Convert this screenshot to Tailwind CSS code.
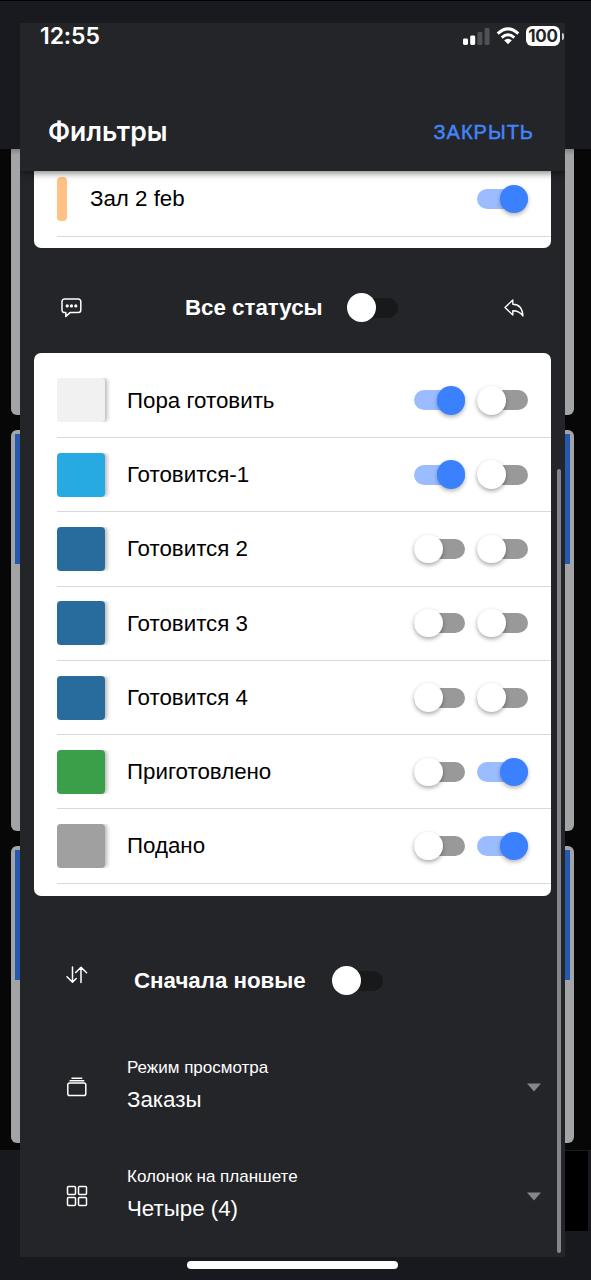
<!DOCTYPE html>
<html lang="ru">
<head>
<meta charset="utf-8">
<title>Фильтры</title>
<script src="https://cdn.jsdelivr.net/npm/@tailwindcss/browser@4"></script>
</head>
<body class="bg-[#050505] font-['Liberation_Sans',Arial,sans-serif]">
<div class="relative w-[591px] h-[1280px] overflow-hidden">

  <!-- Page behind the dialog -->
  <div class="flex flex-col h-full bg-[#070707]">
    <div class="h-[149px] shrink-0 bg-[#191a1f] border-t border-black"></div>
    <div class="h-[1001px] shrink-0 pl-[11px] pr-[17px] flex flex-col">
      <div class="h-[266px] rounded-b-md bg-linear-to-b from-[#838485] to-[#a3a4a6] to-[6px]"></div>
      <div class="mt-[15px] h-[401px] rounded-md bg-[#a3a4a6] px-1 pt-[4px]"><div class="h-[130px] bg-[#2459b0]"></div></div>
      <div class="mt-[15px] h-[297px] rounded-md bg-[#a3a4a6] px-1 pt-[4px]"><div class="h-[130px] bg-[#2459b0]"></div></div>
    </div>
    <div class="grow bg-[#18191e] border-t border-[#1c1d20] pr-[3px] flex justify-end"><div class="w-[60px] h-[80px] bg-black"></div></div>
  </div>

  <!-- Dialog -->
  <div class="absolute left-[20px] top-[23px] w-[545px] h-[1234px] bg-[#242529] flex flex-col text-white">
    <header class="relative z-10 h-[148px] shrink-0 bg-[#242529] shadow-[0_2px_7px_rgba(0,0,0,0.5)] [clip-path:inset(0_0_-14px_0)] flex flex-col">
      <div class="h-[26px] pl-[20px] pr-px flex items-center justify-between font-['Inter',sans-serif]">
        <span id="time" class="text-[23px] leading-[26px] font-semibold tracking-[-0.1px]">12:55</span>
        <div class="flex items-center">
          <svg class="w-[27px] h-[17px]" viewBox="0 0 27 17"><g fill="#fff"><rect y="10.5" width="5" height="6.5" rx="1.4"/><rect x="7.2" y="7.5" width="5" height="9.500" rx="1.400"/></g><g fill="#505155"><rect x="14.400" y="4" width="5" height="13" rx="1.400"/><rect x="21.600" y="0" width="5" height="17" rx="1.400"/></g></svg>
          <svg class="w-[24px] h-[18px] ml-[6.500px]" viewBox="0 0 24 18" fill="none" stroke="#fff" stroke-width="3"><path d="M1.700 6.600Q12-2.900 22.300 6.600"/><path d="M5.700 10.600Q12 5 18.300 10.600"/><path d="M8.100 13.200Q12 10.200 15.900 13.200L12 17.300Z" fill="#fff" stroke="none"/></svg>
          <div class="ml-[6px] w-[34px] h-[20px] rounded-[6px] bg-white text-[#242529] text-[17px] leading-[20px] font-bold text-center tracking-[-0.200px]">100</div>
          <div class="ml-[1.500px] w-[2.500px] h-[7px] rounded-r-full bg-[#c9c9cb]"></div>
        </div>
      </div>
      <div class="mt-[60px] h-[46px] pl-[28px] pr-[31px] flex items-center justify-between">
        <h1 class="font-['Inter',sans-serif] text-[26.500px] font-semibold">Фильтры</h1>
        <button class="text-[#4384f7] text-[20px] tracking-[1px] [-webkit-text-stroke:0.500px_#4384f7] leading-none">ЗАКРЫТЬ</button>
      </div>
    </header>

    <main class="flex flex-col px-[14px] text-[22.300px]">
      <section class="h-[77px] bg-white rounded-b-[7px] pl-[23px] text-black">
        <div class="h-[66px] border-b border-[#d9d9d9] flex items-center pr-[23px] pb-[9px]">
          <div class="w-[10px] h-[44px] rounded-[4px] bg-[#ffc184]"></div>
          <span class="ml-[23px] grow">Зал 2 feb</span>
          <div class="on w-[51px] h-[20px] rounded-full bg-[#9bbdff] flex items-center justify-end"><i class="size-[28.500px] shrink-0 rounded-full bg-[#3a80ff] shadow-[0_2px_4px_rgba(0,0,0,0.3)]"></i></div>
        </div>
      </section>

      <div class="h-[105px] flex items-center pl-[27px] pr-[27px] pt-[14px]">
        <svg class="w-[21px] h-[20px]" viewBox="0 0 21 20" fill="none" stroke="#fff" stroke-width="1.500" stroke-linejoin="round"><path d="M3.500 1h13.800a2.500 2.500 0 0 1 2.500 2.500v8.600a2.500 2.500 0 0 1-2.500 2.500H9L4.800 18.400v-3.800H3.500A2.500 2.500 0 0 1 1 12.100V3.500A2.500 2.500 0 0 1 3.500 1Z"/><g fill="#fff" stroke="none"><circle cx="6.200" cy="7.900" r="1.600"/><circle cx="10.500" cy="7.900" r="1.600"/><circle cx="14.800" cy="7.900" r="1.600"/></g></svg>
        <b class="ml-[103px] whitespace-nowrap w-[162px]">Все статусы</b>
        <div class="w-[51px] h-[20px] rounded-full bg-[#18191a] flex items-center shrink-0"><i class="size-[29px] shrink-0 rounded-full bg-white"></i></div>
        <svg class="ml-auto w-[20px] h-[18px] mt-px" viewBox="0 0 20 18" fill="none" stroke="#fff" stroke-width="1.400" stroke-linejoin="round"><path d="M1 8.500 8.800 1v4.200C15.500 5.300 18.600 10 18.900 17 16.500 13.200 13.500 11.700 8.800 11.700V16Z"/></svg>
      </div>

      <section id="list" class="h-[542.500px] bg-white rounded-[7px] pl-[23px] pt-[10.700px] text-black"></section>

      <div class="mt-[50px] h-[70px] flex items-center pl-[32px]">
        <svg class="w-[22px] h-[18px] mb-[12px]" viewBox="0 0 22 18" fill="none" stroke="#fff" stroke-width="1.500" stroke-linecap="round" stroke-linejoin="round"><path d="M6.500 1v15M1 10.700l5.500 5.500 3.700-3.700M15 16.500V1.500M9.700 6.500 15 1.300l5.600 5.500"/></svg>
        <b class="ml-[46px] w-[198px] whitespace-nowrap">Сначала новые</b>
        <div class="w-[51px] h-[20px] rounded-full bg-[#18191a] flex items-center shrink-0"><i class="size-[29px] shrink-0 rounded-full bg-white"></i></div>
      </div>

      <div class="mt-[17px] h-[109px] flex items-center pl-[32px] pr-[10px]">
        <svg class="w-[22px] h-[20px]" viewBox="0 0 22 20" fill="none" stroke="#fff" stroke-width="1.500"><rect x="1.800" y="6" width="18" height="12.500" rx="1.800"/><path d="M3.500 3.700h14.800M5.500 1.200h10.800"/></svg>
        <div class="ml-[39px] grow"><div class="text-[17px] leading-[20px]">Режим просмотра</div><div class="mt-[9px] leading-[26px] mb-[3px]">Заказы</div></div>
        <svg class="w-[14px] h-[9px]" viewBox="0 0 14 9"><path d="M0 .500h14L7 8.500Z" fill="#858688"/></svg>
      </div>
      <div class="h-[109px] flex items-center pl-[32px] pr-[10px]">
        <svg class="w-[22px] h-[22px]" viewBox="0 0 22 22" fill="none" stroke="#fff" stroke-width="1.500"><rect x="1.500" y="1.500" width="8" height="8" rx="1"/><rect x="12.500" y="1.500" width="8" height="8" rx="1"/><rect x="1.500" y="12.500" width="8" height="8" rx="1"/><rect x="12.500" y="12.500" width="8" height="8" rx="1"/></svg>
        <div class="ml-[39px] grow"><div class="text-[17px] leading-[20px]">Колонок на планшете</div><div class="mt-[9px] leading-[26px] mb-[3px]">Четыре (4)</div></div>
        <svg class="w-[14px] h-[9px]" viewBox="0 0 14 9"><path d="M0 .500h14L7 8.500Z" fill="#858688"/></svg>
      </div>
    </main>

    <!-- Scroll indicator -->
    <div class="absolute right-[4px] top-[446px] w-[4.500px] h-[784px] rounded-full bg-[#858689]"></div>
  </div>

  <!-- Home indicator -->
  <div class="absolute left-[187px] top-[1261px] w-[211px] h-[8px] rounded-full bg-white"></div>
</div>
<script>
  const rows = [
    ['Пора готовить', '#f1f1f1', 1, 0], ['Готовится-1', '#27a9e1', 1, 0],
    ['Готовится 2', '#286c9e', 0, 0], ['Готовится 3', '#286c9e', 0, 0], ['Готовится 4', '#286c9e', 0, 0],
    ['Приготовлено', '#3b9f4a', 0, 1], ['Подано', '#a0a0a0', 0, 1]
  ];
  const toggle = on => on
    ? '<div class="w-[51px] h-[20px] rounded-full bg-[#9bbdff] flex items-center justify-end"><i class="size-[28.500px] shrink-0 rounded-full bg-[#3a80ff] shadow-[0_2px_4px_rgba(0,0,0,0.3)]"></i></div>'
    : '<div class="w-[51px] h-[20px] rounded-full bg-[#999999] flex items-center justify-start"><i class="size-[28.500px] shrink-0 rounded-full bg-white shadow-[0_2px_4px_rgba(0,0,0,0.35)]"></i></div>';
  document.getElementById('list').innerHTML = rows.map(([name, color, a, b]) =>
    `<div class="h-[74.300px] border-b border-[#d9d9d9] flex items-center pr-[23px]">
      <div class="w-[55px] h-[44px] overflow-hidden"><div class="w-[47.500px] h-[44px] rounded-[4px] shadow-[2px_0_4px_rgba(0,0,0,0.3)]" style="background:${color}"></div></div>
      <span class="ml-[15px] grow">${name}</span>
      <div class="flex gap-[12px]">${toggle(a)}${toggle(b)}</div>
    </div>`).join('');
</script>
</body>
</html>
